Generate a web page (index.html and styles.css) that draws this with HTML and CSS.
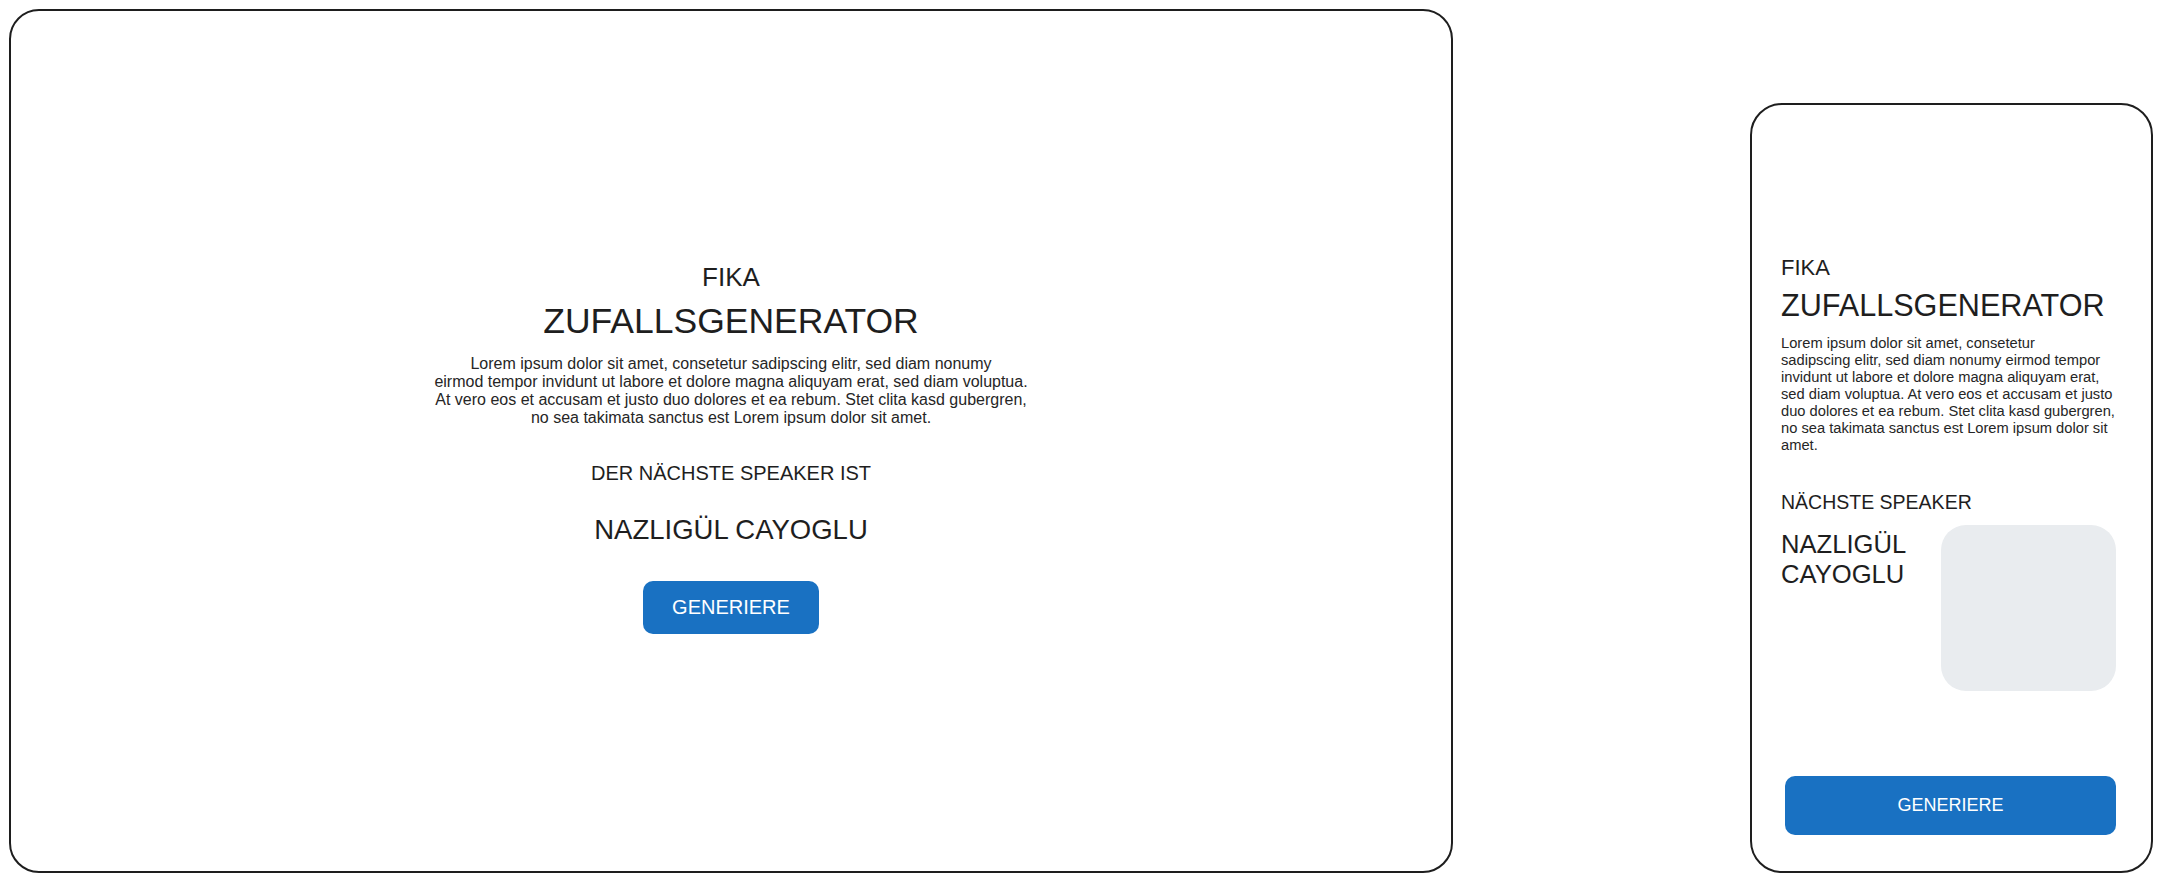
FILE: index.html
```html
<!DOCTYPE html>
<html lang="de">
<head>
<meta charset="utf-8">
<title>FIKA Zufallsgenerator</title>
<link rel="stylesheet" href="styles.css">
</head>
<body>
<div class="stage">
  <section class="frame desktop">
    <p class="d-kicker">FIKA</p>
    <h1 class="d-title">ZUFALLSGENERATOR</h1>
    <p class="d-lead">Lorem ipsum dolor sit amet, consetetur sadipscing elitr, sed diam nonumy<br>eirmod tempor invidunt ut labore et dolore magna aliquyam erat, sed diam voluptua.<br>At vero eos et accusam et justo duo dolores et ea rebum. Stet clita kasd gubergren,<br>no sea takimata sanctus est Lorem ipsum dolor sit amet.</p>
    <p class="d-label">DER NÄCHSTE SPEAKER IST</p>
    <p class="d-name">NAZLIGÜL CAYOGLU</p>
    <button class="d-btn" type="button">GENERIERE</button>
  </section>
  <section class="frame mobile">
    <p class="m-kicker">FIKA</p>
    <h1 class="m-title">ZUFALLSGENERATOR</h1>
    <p class="m-lead">Lorem ipsum dolor sit amet, consetetur<br>sadipscing elitr, sed diam nonumy eirmod tempor<br>invidunt ut labore et dolore magna aliquyam erat,<br>sed diam voluptua. At vero eos et accusam et justo<br>duo dolores et ea rebum. Stet clita kasd gubergren,<br>no sea takimata sanctus est Lorem ipsum dolor sit<br>amet.</p>
    <p class="m-label">NÄCHSTE SPEAKER</p>
    <div class="m-row">
      <p class="m-name">NAZLIGÜL CAYOGLU</p>
      <div class="m-photo"></div>
    </div>
    <button class="m-btn" type="button">GENERIERE</button>
  </section>
</div>
</body>
</html>
```
FILE: styles.css
```css
* { box-sizing: border-box; }

html, body {
  margin: 0;
  padding: 0;
  background: #ffffff;
}

body {
  font-family: "Liberation Sans", Arial, Helvetica, sans-serif;
  color: #1e1e1e;
}

p, h1 { margin: 0; font-weight: 400; }

.stage {
  width: 2161px;
  height: 882px;
  display: flex;
  justify-content: space-between;
  align-items: flex-end;
  padding: 9px 8px 9px 9px;
}

.frame {
  border: 2px solid #1e1e1e;
  background: #ffffff;
  display: flex;
  flex-direction: column;
}

/* ---------- desktop ---------- */
.desktop {
  width: 1444px;
  height: 864px;
  border-radius: 30px;
  align-items: center;
  text-align: center;
  padding-top: 251px;
}

.d-kicker {
  font-size: 26px;
  line-height: 30px;
}

.d-title {
  margin-top: 8.7px;
  font-size: 35.5px;
  line-height: 40px;
}

.d-lead {
  margin-top: 14px;
  font-size: 16px;
  line-height: 18.2px;
  white-space: nowrap;
  color: #262626;
}

.d-label {
  margin-top: 33.5px;
  font-size: 20px;
  line-height: 24px;
}

.d-name {
  margin-top: 28.8px;
  font-size: 27.5px;
  line-height: 32px;
}

.d-btn {
  margin-top: 35.2px;
  width: 176px;
  height: 53px;
  border: none;
  border-radius: 10px;
  background: #1971c2;
  color: #ffffff;
  font-family: inherit;
  font-size: 20px;
  padding: 0;
}

/* ---------- mobile ---------- */
.mobile {
  width: 403px;
  height: 770px;
  border-radius: 32px;
  padding: 150px 35px 0 29px;
}

.m-kicker {
  font-size: 22px;
  line-height: 26px;
}

.m-title {
  margin-top: 7.1px;
  font-size: 30.6px;
  line-height: 34px;
}

.m-lead {
  margin-top: 13.4px;
  font-size: 14.7px;
  line-height: 17px;
  white-space: nowrap;
  color: #262626;
}

.m-label {
  margin-top: 36.5px;
  font-size: 19.5px;
  line-height: 23px;
}

.m-row {
  margin-top: 11px;
  display: flex;
  justify-content: space-between;
  align-items: flex-start;
}

.m-name {
  flex: 1;
  margin-top: 3.8px;
  font-size: 25.6px;
  line-height: 30px;
}

.m-photo {
  flex: none;
  width: 175px;
  height: 166px;
  border-radius: 25px;
  background: #e9ecef;
}

.m-btn {
  margin-top: 85px;
  margin-left: 4px;
  width: 331px;
  height: 59px;
  border: none;
  border-radius: 10px;
  background: #1971c2;
  color: #ffffff;
  font-family: inherit;
  font-size: 18px;
  padding: 0;
}
```
